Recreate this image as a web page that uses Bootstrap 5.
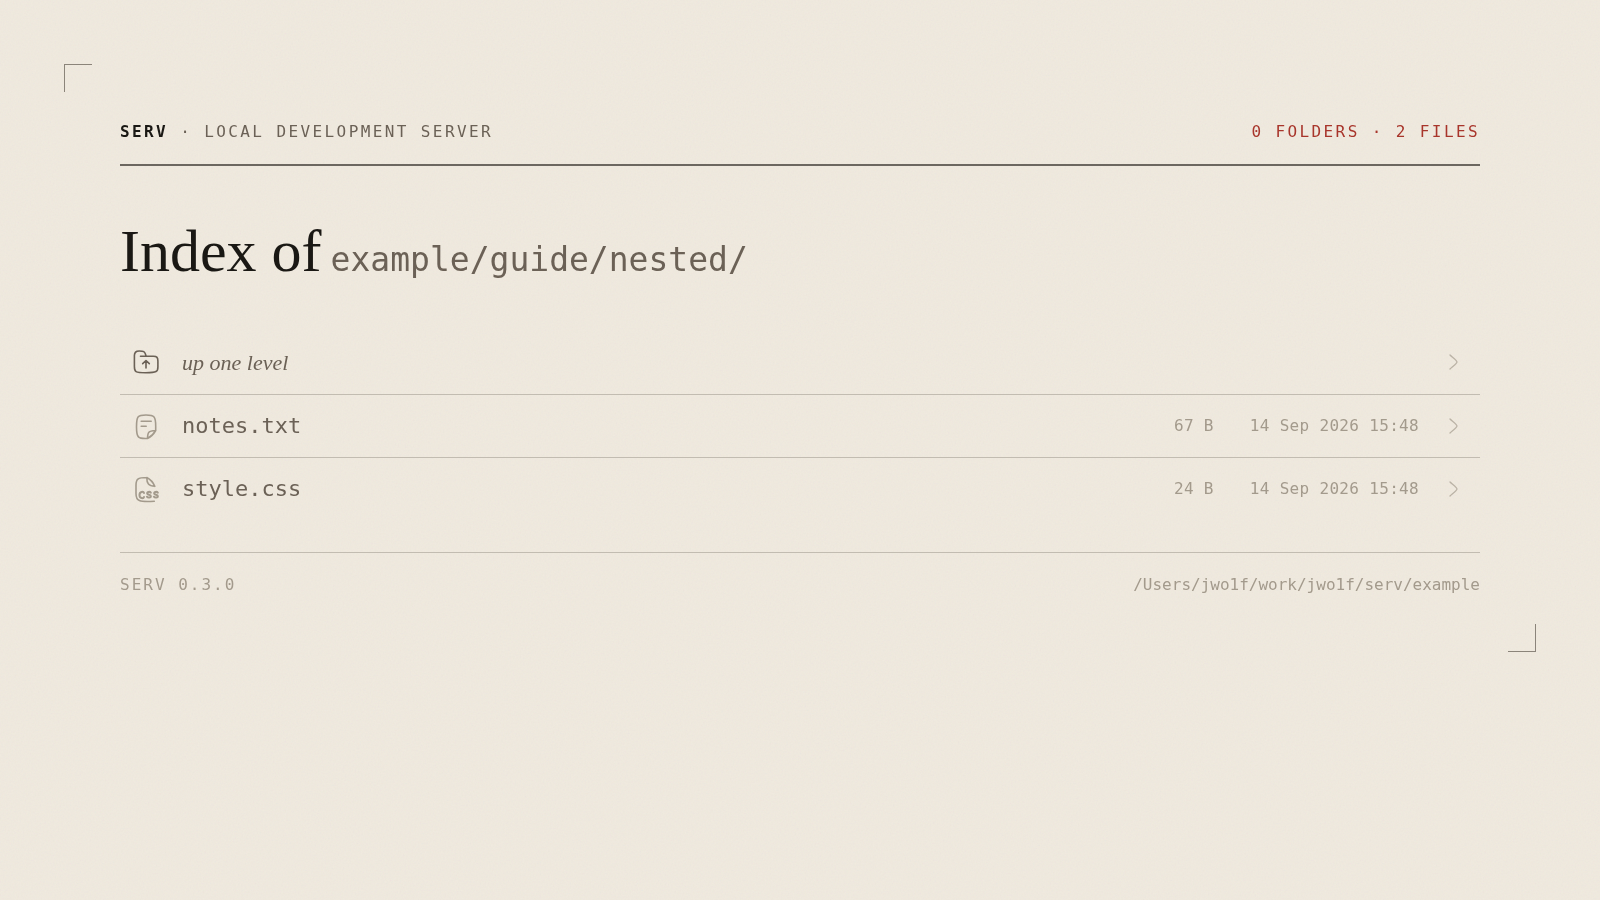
<!DOCTYPE html>
<html lang="en">
<head>
<meta charset="utf-8">
<meta name="viewport" content="width=device-width, initial-scale=1">
<title>Index of example/guide/nested/</title>
<link rel="stylesheet" href="https://cdn.jsdelivr.net/npm/bootstrap@5.3.0/dist/css/bootstrap.min.css">
<style>
:root { --paper: #f0eadf; --ink: #1a1814; --soft: #6b6156; --faint: #a39a8c; --rule: #c2bcb1; --accent: #a8352b; }
body { background: var(--paper); color: var(--soft); font-family: "DejaVu Sans Mono", monospace; font-size: 16px; line-height: 24px; }
a { color: inherit; text-decoration: none; }
.grain { position: fixed; inset: 0; width: 100%; height: 100%; opacity: .05; pointer-events: none; }
.sheet { margin: 64px; padding: 56px 56px 55px; }
.sheet::before, .sheet::after { content: ""; position: absolute; width: 28px; height: 28px; border: 0 solid #8b847a; }
.sheet::before { top: 0; left: 0; border-width: 1px 0 0 1px; }
.sheet::after { right: 0; bottom: 0; border-width: 0 1px 1px 0; }
.masthead { border-bottom: 2px solid #6c6760; padding-bottom: 20px; letter-spacing: .15em; }
.masthead strong { color: var(--ink); }
.tally { color: var(--accent); }
.title { font: 400 60px/72px "Liberation Serif", serif; color: var(--ink); margin: 49px 0 44px; column-gap: 9px; }
.path { font: 33px/40px "DejaVu Sans Mono", monospace; color: var(--soft); }
.entry { height: 63px; padding: 0 17px 0 12px; }
li + li .entry { border-top: 1px solid var(--rule); }
.entry:hover { color: var(--ink); }
.entry-icon { width: 28px; height: 28px; margin-right: 22px; color: var(--faint); }
.entry-up .entry-icon { color: var(--soft); }
.entry-name { font-size: 22px; }
.entry-up .entry-name { font-family: "Liberation Serif", serif; font-style: italic; }
.meta { color: var(--faint); letter-spacing: .02em; }
.meta + .meta { margin-left: 36px; }
.chev { width: 20px; height: 20px; margin-left: 24px; color: #bab2a5; }
.colophon { margin-top: 32px; border-top: 1px solid var(--rule); padding-top: 20px; color: var(--faint); }
.version { letter-spacing: 2px; }
svg { fill: none; stroke: currentColor; stroke-linecap: round; stroke-linejoin: round; flex: none; }
</style>
</head>
<body>
<svg class="grain" aria-hidden="true"><filter id="noise"><feTurbulence type="fractalNoise" baseFrequency=".6" numOctaves="2" stitchTiles="stitch"/></filter><rect width="100%" height="100%" filter="url(#noise)" stroke="none"/></svg>
<main class="sheet position-relative">
  <header class="masthead d-flex flex-wrap justify-content-between">
    <span><strong>SERV</strong> · LOCAL DEVELOPMENT SERVER</span>
    <span class="tally">0 FOLDERS · 2 FILES</span>
  </header>
  <h1 class="title d-flex flex-wrap align-items-baseline"><span>Index of</span> <span class="path">example/guide/nested/</span></h1>
  <ul class="list-unstyled m-0">
    <li><a class="entry entry-up d-flex align-items-center" href="../">
      <svg class="entry-icon" viewBox="0 0 28 28" stroke-width="1.6" aria-hidden="true"><path d="M8.500 7.300h12.800c3.800 0 4.600 1.200 4.600 4.800v5.800c0 4.700-1.100 5.800-12 5.800S2.400 22.900 2.400 17.500V6.600C2.400 3.200 3.800 2 7.200 2c4.300 0 5.700.2 6.800 4.800M14 19v-7M10.700 14.600L14 11.500l3.300 3.100"/></svg>
      <span class="entry-name flex-grow-1">up one level</span>
      <svg class="chev" viewBox="0 0 20 20" stroke-width="1.3" aria-hidden="true"><path d="M7 2c2 2 7 5.600 7 7s-5 5-7 7"/></svg>
    </a></li>
    <li><a class="entry d-flex align-items-center" href="notes.txt">
      <svg class="entry-icon" viewBox="0 0 28 28" stroke-width="1.6" aria-hidden="true"><path d="M15.500 26.500C6 27 4.500 25.500 4.500 15S5.500 3 14 3s9.700 1.500 9.700 11v4.500c-2.200 4-4.200 6-8.200 8zM15.500 26.500c.2-6.500.8-7.500 8-8M9.200 9.300h10M9.200 14.200h5"/></svg>
      <span class="entry-name flex-grow-1">notes.txt</span>
      <span class="meta">67 B</span><time class="meta" datetime="2026-09-14T15:48">14 Sep 2026 15:48</time>
      <svg class="chev" viewBox="0 0 20 20" stroke-width="1.3" aria-hidden="true"><path d="M7 3c2 2 7 5.600 7 7s-5 5-7 7"/></svg>
    </a></li>
    <li><a class="entry d-flex align-items-center" href="style.css">
      <svg class="entry-icon" viewBox="0 0 28 28" stroke-width="1.6" aria-hidden="true"><path d="M22.300 26.300C7 27.300 4 26 4 18.500V10.500C4 4 5.500 2.500 14.800 2.500c2.500 1.300 6.500 5.300 8 8.800M14.800 2.500c-.1 6 1.800 8.400 8 8.800"/><path stroke-width="2" d="M12 18c-.5-1.700-4.500-1.700-4.500 2s4 3.700 4.500 2M18.800 17.600c-1-1.300-4-.8-3.600.9.300 1.500 3.700 1 3.700 2.700 0 1.700-3 1.800-4 .5M25.800 17.600c-1-1.300-4-.8-3.600.9.300 1.500 3.700 1 3.700 2.700 0 1.700-3 1.800-4 .5"/></svg>
      <span class="entry-name flex-grow-1">style.css</span>
      <span class="meta">24 B</span><time class="meta" datetime="2026-09-14T15:48">14 Sep 2026 15:48</time>
      <svg class="chev" viewBox="0 0 20 20" stroke-width="1.3" aria-hidden="true"><path d="M7 3c2 2 7 5.600 7 7s-5 5-7 7"/></svg>
    </a></li>
  </ul>
  <footer class="colophon d-flex flex-wrap justify-content-between">
    <span class="version">SERV 0.3.0</span>
    <span>/Users/jwo1f/work/jwo1f/serv/example</span>
  </footer>
</main>
<script src="https://cdn.jsdelivr.net/npm/bootstrap@5.3.0/dist/js/bootstrap.bundle.min.js"></script>
</body>
</html>
